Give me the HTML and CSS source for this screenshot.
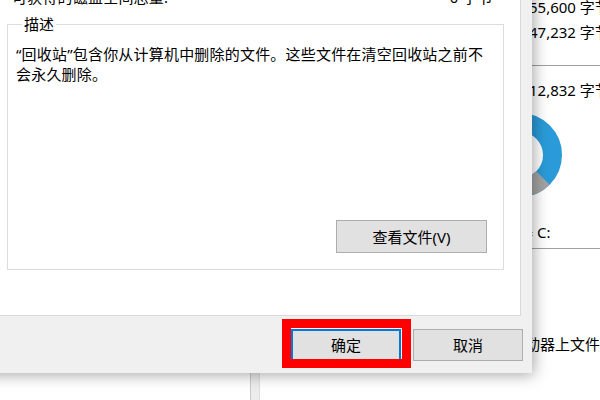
FILE: index.html
```html
<!DOCTYPE html>
<html lang="zh-CN">
<head>
    <meta charset="UTF-8">
    <title>磁盘清理</title>
    <link rel="stylesheet" href="styles.css">
</head>
<body>
    <div class="desktop">
        <!-- window behind the dialog -->
        <div class="bgwin">
            <div class="bg-left"></div>
            <div class="splitter"></div>
            <div class="bg-right">
                <div class="stat first">55,600 字节</div>
                <div class="stat second">47,232 字节</div>
                <div class="rule r1"></div>
                <div class="stat third">12,832 字节</div>
                <svg class="donut" width="100" height="100" viewBox="0 0 100 100">
                    <circle cx="50" cy="50" r="32.5" fill="none" stroke="#2a9bd8" stroke-width="19"/>
                    <path d="M72.98 72.98 A32.5 32.5 0 0 1 38.88 80.54" fill="none" stroke="#a3a3a3" stroke-width="19"/>
                </svg>
                <div class="drive">驱动器 C:</div>
                <div class="rule r2"></div>
                <div class="note">驱动器上文件</div>
            </div>
        </div>

        <!-- the dialog -->
        <div class="dialog">
            <div class="panel">
                <div class="total">
                    <span>可获得的磁盘空间总量:</span>
                    <span>0 字节</span>
                </div>
                <fieldset class="group">
                    <legend>描述</legend>
                    <p>“回收站”包含你从计算机中删除的文件。这些文件在清空回收站之前不<br>会永久删除。</p>
                    <button class="btn view">查看文件(V)</button>
                </fieldset>
            </div>
            <div class="footer">
                <button class="btn primary">确定</button>
                <button class="btn">取消</button>
            </div>
        </div>

        <div class="highlight"></div>
    </div>
</body>
</html>
```

FILE: styles.css
```css
body {
    margin: 0;
    font-family: "Noto Sans", "Noto Sans CJK SC", sans-serif;
    font-size: 15px;
    line-height: 20px;
    color: #000;
    background-color: #fff;
}
.desktop {
    position: relative;
    width: 600px;
    height: 400px;
    overflow: hidden;
}
.bgwin {
    display: flex;
    height: 400px;
    background-color: #fff;
}
.bg-left {
    width: 250px;
    flex-shrink: 0;
}
.splitter {
    width: 8px;
    flex-shrink: 0;
    background-color: #ececec;
    border-left: 1px solid #c9c9c9;
    border-right: 1px solid #dedede;
}
.bg-right {
    flex: 1;
    min-width: 0;
    overflow: hidden;
    padding-left: 210px;
    display: flex;
    flex-direction: column;
    align-items: flex-start;
}
.stat {
    padding-left: 59px;
    white-space: nowrap;
}
.stat.first {
    margin-top: -3px;
}
.stat.second {
    margin-top: 5px;
}
.stat.third {
    margin-top: 14px;
}
.rule {
    align-self: stretch;
    height: 1px;
    background-color: #a0a0a0;
}
.rule.r1 {
    margin-top: 23px;
}
.rule.r2 {
    margin-top: 6px;
}
.donut {
    margin-top: 5px;
    display: block;
    flex-shrink: 0;
}
.drive {
    margin-top: 17px;
    padding-left: 18px;
    white-space: nowrap;
}
.note {
    margin-top: 85px;
    padding-left: 40px;
    white-space: nowrap;
}

.dialog {
    position: absolute;
    left: -20px;
    top: -60px;
    width: 552px;
    height: 433px;
    display: flex;
    flex-direction: column;
    background-color: #f0f0f0;
    box-shadow: 2px 2px 14px rgba(0,0,0,0.35);
}
.panel {
    flex: 1;
    margin-right: 11px;
    padding: 47px 16px 0 27px;
    background-color: #fff;
    border-right: 1px solid #d9d9d9;
    border-bottom: 1px solid #d9d9d9;
}
.total {
    display: flex;
    justify-content: space-between;
    padding: 0 11px 0 5px;
    letter-spacing: 0.2px;
}
.group {
    margin: 7px 0 0;
    height: 256px;
    box-sizing: border-box;
    padding: 10px 16px 16px 8px;
    border: 1px solid #dcdcdc;
    display: flex;
    flex-direction: column;
}
.group legend {
    margin-left: 6px;
    padding: 0 2px;
    line-height: 20px;
}
.group p {
    margin: 0;
    letter-spacing: 0.2px;
}
.btn {
    font-family: inherit;
    font-size: 15px;
    line-height: 20px;
    color: #000;
    width: 110px;
    height: 32px;
    padding: 0;
    background-color: #e1e1e1;
    border: 1px solid #adadad;
}
.btn.view {
    margin-top: auto;
    align-self: flex-end;
    width: 151px;
    height: 33px;
}
.btn.primary {
    border: 2px solid #0078d7;
}
.footer {
    display: flex;
    justify-content: flex-end;
    gap: 12px;
    padding: 13px 9px 12px 0;
}
.highlight {
    position: absolute;
    left: 282px;
    top: 319px;
    width: 111px;
    height: 31px;
    border: 9px solid #ff0000;
}
```
